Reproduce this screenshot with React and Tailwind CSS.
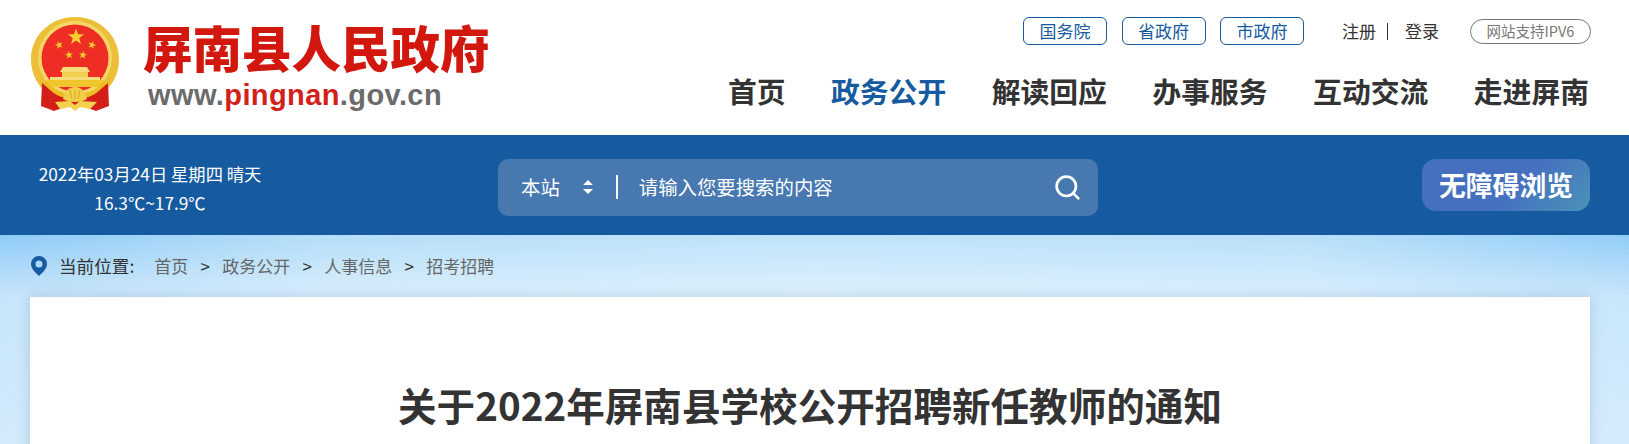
import { Search } from "lucide-react";

const cjk = "font-['Noto_Sans_CJK_SC','Liberation_Sans',sans-serif]";

const navItems = ["首页", "政务公开", "解读回应", "办事服务", "互动交流", "走进屏南"];
const topLinks = ["国务院", "省政府", "市政府"];
const crumbs = ["首页", "政务公开", "人事信息", "招考招聘"];

// five point star centred on cx, cy
const starPoints = (cx, cy, r, rot = 0) => {
  const pts = [];
  for (let i = 0; i < 10; i++) {
    const rad = i % 2 === 0 ? r : r * 0.4;
    const a = (Math.PI / 5) * i - Math.PI / 2 + rot;
    pts.push(`${(cx + rad * Math.cos(a)).toFixed(2)},${(cy + rad * Math.sin(a)).toFixed(2)}`);
  }
  return pts.join(" ");
};

const Emblem = () => (
  <svg viewBox="0 0 90 95" className="w-[90px] h-[95px] shrink-0">
    <path d="M45 0C20 0 1 19 1 42c0 14 6 26 15 33 7 6 17 10 29 10s22-4 29-10c9-7 15-19 15-33C89 19 70 0 45 0z" fill="#edbf38" />
    <circle cx="45" cy="41" r="37" fill="#f4d766" />
    <circle cx="45" cy="41" r="33.5" fill="#ee2e24" />
    <polygon points={starPoints(46, 20, 8.5)} fill="#f5d02f" />
    <polygon points={starPoints(29, 28, 4.3, -0.3)} fill="#f1c92d" />
    <polygon points={starPoints(62, 28, 4.3, 0.3)} fill="#f1c92d" />
    <polygon points={starPoints(39, 38, 4.3, -0.15)} fill="#f1c92d" />
    <polygon points={starPoints(53, 38, 4.3, 0.15)} fill="#f1c92d" />
    <path d="M33 50h24l3 5H30z" fill="#f7dc7a" />
    <rect x="32" y="55" width="26" height="5" fill="#f3d04f" />
    <path d="M20 60h50v3H20z" fill="#f7dc7a" />
    <path d="M18 63h54l3 7H15z" fill="#f1c52d" />
    <path d="M12 66 L24 76 C30 80 38 82 45 82 C52 82 60 80 66 76 L78 66 L79 89 L66 94 L55 90 H35 L24 94 L11 89 Z" fill="#d41f18" />
    <path d="M14 66c7 10 17 16 31 16s24-6 31-16l-2-3c-6 9-15 14-29 14S22 72 16 63z" fill="#ecbc22" />
    <path d="M45 70c4 0 8 2 10 6l2 6c-3 2-8 3-12 3s-9-1-12-3l2-6c2-4 6-6 10-6z" fill="#f3cf49" />
    <path d="M45 72v10M40 73l2 9M50 73l-2 9" stroke="#d9a91f" strokeWidth="1" />
    <path d="M25 85 L40 84 L45 88 L50 84 L67 85 L60 92 L50 90 L45 94 L40 90 L30 92 Z" fill="#f4d04c" />
  </svg>
);

const App = () => {
  return (
    <div className={`w-[1629px] h-[444px] overflow-hidden bg-white ${cjk}`}>
      <header className="h-[135px] flex justify-between pl-[30px] pr-[38px]">
        <div className="flex pt-[17px]">
          <Emblem />
          <div className="ml-[23px] flex flex-col">
            <div className="text-[49.5px] leading-[60px] font-black text-[#d2170f] whitespace-nowrap">
              屏南县人民政府
            </div>
            <div className="ml-[5px] mt-[2px] font-['Liberation_Sans',sans-serif] text-[29px] leading-[32px] font-bold tracking-[0.4px] text-[#6b6b6b] whitespace-nowrap">
              www.<span className="text-[#d2211a]">pingnan</span>.gov.cn
            </div>
          </div>
        </div>

        <div className="flex flex-col items-end">
          <div className="flex items-center mt-[17px] h-[28px] text-[17px]">
            <div className="flex gap-[14.5px]">
              {topLinks.map((t) => (
                <a key={t} className="w-[84px] h-[28px] flex items-center justify-center border border-[#165aa0] rounded-[6px] text-[#165aa0]">
                  {t}
                </a>
              ))}
            </div>
            <span className="ml-[38px] text-[#333]">注册</span>
            <span className="ml-[11px] w-px h-[17px] bg-[#333]" />
            <span className="ml-[17px] text-[#333]">登录</span>
            <span className="ml-[31px] w-[121px] h-[25px] flex items-center justify-center border border-[#777] rounded-full text-[14.5px] text-[#777]">
              网站支持IPV6
            </span>
          </div>
          <nav className="flex gap-[45.5px] mt-[26px] mr-[2px] text-[28.8px] leading-[40px] font-bold text-[#333]">
            {navItems.map((n) => (
              <a key={n} className={n === "政务公开" ? "text-[#165aa0]" : ""}>
                {n}
              </a>
            ))}
          </nav>
        </div>
      </header>

      <div className="h-[100px] bg-[#165aa0] flex items-center pl-[38px] pr-[39px]">
        <div className="mt-[6px] w-[224px] shrink-0 text-center text-white text-[17.3px] leading-[29px] whitespace-nowrap">
          <div>2022年03月24日 星期四 晴天</div>
          <div>16.3℃~17.9℃</div>
        </div>
        <div className="mt-[4px] ml-[236px] w-[600px] h-[57px] rounded-[10px] bg-[#4778b0] flex items-center pl-[23px] pr-[16px] text-white text-[19.4px]">
          <span>本站</span>
          <svg viewBox="0 0 12 18" className="ml-[22px] w-[12px] h-[18px]">
            <path d="M6 2l5 5H1z M6 16l5-5H1z" fill="#fff" />
          </svg>
          <span className="ml-[22px] w-[2px] h-[24px] bg-white" />
          <span className="ml-[21px]">请输入您要搜索的内容</span>
          <Search className="ml-auto w-[29px] h-[29px]" strokeWidth={2.2} />
        </div>
        <div className="ml-auto w-[168px] h-[52px] rounded-[14px] bg-[linear-gradient(135deg,#4570bf_0%,#4570bf_55%,#4a93b8_100%)] flex items-center justify-center text-white text-[26.8px] font-bold">
          无障碍浏览
        </div>
      </div>

      <div className="h-[209px] pl-[30px] pr-[39px] bg-[linear-gradient(180deg,rgba(255,255,255,0)_0%,rgba(255,255,255,0.5)_30%,rgba(255,255,255,0.6)_100%),linear-gradient(90deg,#8fcbf6_0%,#b5def9_20%,#c0e4fb_50%,#b8e0fa_80%,#92cdf7_100%)]">
        <div className="h-[62px] flex items-center text-[17px] text-[#666]">
          <svg viewBox="0 0 16 20" className="ml-px w-[16px] h-[20px]">
            <path fillRule="evenodd" d="M8 0a8 8 0 0 1 8 8c0 5-5 9-8 12C5 17 0 13 0 8a8 8 0 0 1 8-8zm0 4.5a3.5 3.5 0 1 0 0 7 3.5 3.5 0 0 0 0-7z" fill="#165aa0" />
          </svg>
          <span className="ml-[12px] text-[17.6px] text-[#333]">当前位置:</span>
          <div className="ml-[20px] flex items-center">
            {crumbs.map((c, i) => (
              <span key={c} className="flex items-center">
                {i > 0 && <span className="w-[34px] text-center text-[#333]">&gt;</span>}
                {c}
              </span>
            ))}
          </div>
        </div>
        <main className="h-[200px] bg-white shadow-[0_0_12px_rgba(120,150,190,0.4)] pt-[80px] text-center">
          <h1 className="text-[38.6px] leading-[54px] font-bold text-[#333]">
            关于2022年屏南县学校公开招聘新任教师的通知
          </h1>
        </main>
      </div>
    </div>
  );
};

export default App;
